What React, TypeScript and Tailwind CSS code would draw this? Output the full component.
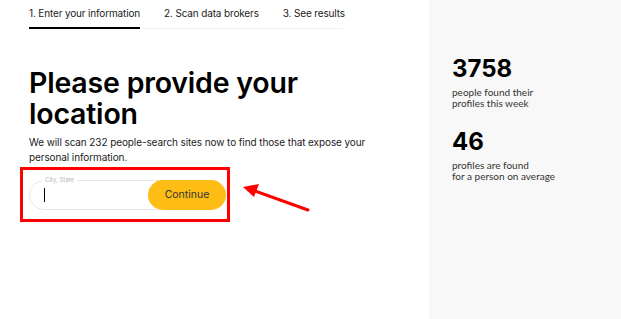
import React from 'react';

const tabs = ['1. Enter your information', '2. Scan data brokers', '3. See results'];

const stats = [
  { value: '3758', lines: ['people found their', 'profiles this week'] },
  { value: '46', lines: ['profiles are found', 'for a person on average'] },
];

export default function App() {
  return (
    <div className="flex w-[621px] h-[319px] bg-white overflow-hidden" style={{ fontFamily: 'Inter, "Noto Sans", sans-serif' }}>
      <div className="relative w-[429px] pl-[29px]">
        {/* steps */}
        <div className="flex gap-[24px] w-[314px] border-b border-[#f0f0f0] whitespace-nowrap">
          {tabs.map((t, i) => (
            <div
              key={t}
              className={`pt-[7px] pb-[7px] text-[10px] leading-[13px] text-[#222] tracking-[-0.15px] ${
                i === 0 ? 'border-b-2 border-black -mb-px' : ''
              }`}
            >
              {t}
            </div>
          ))}
        </div>

        <h1 className="mt-[38px] text-[28.5px] leading-[31px] font-semibold text-black tracking-[-0.2px]">
          <span className="block">Please provide your</span>
          <span className="block">location</span>
        </h1>
        <p className="mt-[6px] text-[10px] leading-[15px] text-[#222] w-[345px] tracking-[-0.1px]">
          We will scan 232 people-search sites now to find those that expose your personal information.
        </p>

        {/* highlighted form */}
        <div className="mt-[2px] -ml-[9px] w-[210px] h-[55px] border-[3px] border-[#f00] pt-[10px] pl-[6px]">
          <div className="relative flex items-center w-[197px] h-[30px] rounded-full border border-[#e8e8e8]">
            <span className="absolute -top-[5px] left-[12px] px-[3px] bg-white text-[6px] leading-[8px] text-[#b5b5b5]">
              City, State
            </span>
            <div className="ml-[14px] w-px h-[14px] bg-black" />
            <button className="ml-auto -mr-px w-[78px] h-[30px] rounded-full bg-[#fdbd14] text-[10.5px] text-[#333]">
              Continue
            </button>
          </div>
        </div>

        <svg className="absolute left-[238px] top-[182px]" width="74" height="32" viewBox="0 0 74 32">
          <line x1="70" y1="28" x2="14" y2="8" stroke="#f00" strokeWidth="3" strokeLinecap="round" />
          <polygon points="5,5 21,2 16,15" fill="#f00" />
        </svg>
      </div>

      <div className="flex-1 bg-[#f8f8f8] pl-[23px] pt-[55px]" style={{ fontFamily: 'Lato, "Noto Sans", sans-serif' }}>
        {stats.map((s, i) => (
          <div key={s.value} className={i === 0 ? '' : 'mt-[19px]'}>
            <div className="text-[24px] leading-[28px] font-bold text-black" style={{ fontFamily: 'Inter, sans-serif' }}>
              {s.value}
            </div>
            <div className="mt-[4px] text-[10px] leading-[11px] text-[#333]">
              <div>{s.lines[0]}</div>
              <div>{s.lines[1]}</div>
            </div>
          </div>
        ))}
      </div>
    </div>
  );
}
